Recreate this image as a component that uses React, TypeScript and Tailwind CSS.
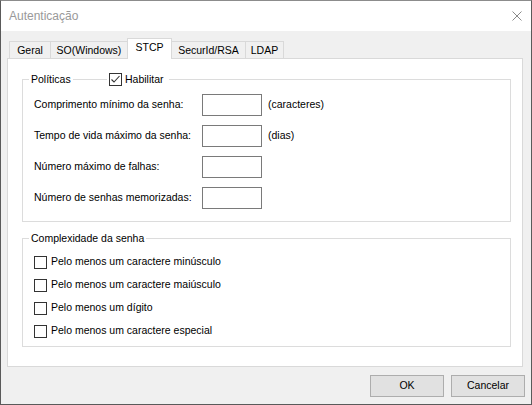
import { useState } from 'react';

const tabs = [
  { name: 'Geral', width: 'w-[42px]' },
  { name: 'SO(Windows)', width: 'w-[78px]' },
  { name: 'STCP', width: 'w-[45px]' },
  { name: 'SecurId/RSA', width: 'w-[75px]' },
  { name: 'LDAP', width: 'w-[39px]' },
];

const policyRows = [
  { label: 'Comprimento mínimo da senha:', suffix: '(caracteres)' },
  { label: 'Tempo de vida máximo da senha:', suffix: '(dias)' },
  { label: 'Número máximo de falhas:', suffix: '' },
  { label: 'Número de senhas memorizadas:', suffix: '' },
];

const complexity = [
  'Pelo menos um caractere minúsculo',
  'Pelo menos um caractere maiúsculo',
  'Pelo menos um dígito',
  'Pelo menos um caractere especial',
];

function CheckBox({ checked, onClick }: { checked: boolean; onClick: () => void }) {
  return (
    <span
      onClick={onClick}
      className="w-[13px] h-[13px] shrink-0 border border-[#333333] bg-white flex items-center justify-center"
    >
      {checked && (
        <svg width="11" height="11" viewBox="0 0 11 11">
          <polyline points="1.5,5.5 4,8 9.5,2" fill="none" stroke="#333333" strokeWidth="1.1" />
        </svg>
      )}
    </span>
  );
}

export default function App() {
  const [active, setActive] = useState('STCP');
  const [enabled, setEnabled] = useState(true);
  const [rules, setRules] = useState<boolean[]>([false, false, false, false]);

  return (
    <div className="w-[532px] h-[405px] flex flex-col bg-[#f0f0f0] border border-[#5a5a5a] border-t-[#8c8c8c] font-['Liberation_Sans',Arial,sans-serif] text-[10.5px] text-black overflow-hidden">
      {/* Title bar */}
      <div className="h-[30px] shrink-0 bg-white flex items-center justify-between pl-[8px] pr-[9px]">
        <span className="text-[12px] text-[#999999]">Autenticação</span>
        <svg width="10" height="10" viewBox="0 0 10 10">
          <path d="M0.5 0.5 L9.5 9.5 M9.5 0.5 L0.5 9.5" stroke="#8a8a8a" strokeWidth="1" fill="none" />
        </svg>
      </div>

      <div className="flex flex-col pt-[7px]">
        {/* Tabs */}
        <div className="h-[20px] flex items-end ml-[8px] relative z-10">
          {tabs.map((tab, i) => {
            const isActive = tab.name === active;
            return (
              <button
                key={tab.name}
                onClick={() => setActive(tab.name)}
                className={`${tab.width} ${i > 0 ? '-ml-px' : ''} border border-b-0 flex justify-center leading-[14px] ${
                  isActive
                    ? 'h-[21px] -mb-px bg-white border-[#d9d9d9] pt-[1px] relative z-10'
                    : 'h-[17px] bg-[#f0f0f0] border-[#d9d9d9] pt-[1px]'
                }`}
              >
                {tab.name}
              </button>
            );
          })}
        </div>

        {/* Tab panel */}
        <div className="h-[309px] ml-[6px] mr-[8px] bg-white border border-[#d9d9d9] pl-[14px] pr-[11px]">
          {/* Políticas */}
          <div className="relative mt-[20px] border border-[#dcdcdc] pt-[14px] pb-[12px] pl-[11px]">
            <div className="absolute -top-[8px] left-[6px] h-[14px] leading-[14px] bg-white px-[2px]">Políticas</div>
            <div className="absolute -top-[8px] left-[84px] h-[14px] leading-[14px] bg-white pl-[2px] pr-[5px] flex items-center gap-[3px]">
              <CheckBox checked={enabled} onClick={() => setEnabled(!enabled)} />
              <span>Habilitar</span>
            </div>

            <div className="flex flex-col gap-[9px]">
              {policyRows.map((row) => (
                <div key={row.label} className="flex items-center h-[22px]">
                  <span className="w-[168px] shrink-0">{row.label}</span>
                  <div className="w-[60px] h-[22px] border border-[#7a7a7a] bg-white" />
                  {row.suffix && <span className="ml-[6px]">{row.suffix}</span>}
                </div>
              ))}
            </div>
          </div>

          {/* Complexidade da senha */}
          <div className="relative mt-[16px] border border-[#dcdcdc] pt-[16px] pb-[8px] pl-[11px]">
            <div className="absolute -top-[8px] left-[6px] h-[14px] leading-[14px] bg-white px-[2px]">Complexidade da senha</div>
            <div className="flex flex-col gap-[9px]">
              {complexity.map((text, i) => (
                <div key={text} className="flex items-center h-[14px] gap-[4px]">
                  <CheckBox
                    checked={rules[i]}
                    onClick={() => setRules(rules.map((r, j) => (j === i ? !r : r)))}
                  />
                  <span>{text}</span>
                </div>
              ))}
            </div>
          </div>
        </div>

        {/* Buttons */}
        <div className="mt-[8px] flex justify-end gap-[7px] pr-[6px]">
          <button className="w-[74px] h-[22px] bg-[#e1e1e1] border border-[#adadad]">OK</button>
          <button className="w-[74px] h-[22px] bg-[#e1e1e1] border border-[#adadad]">Cancelar</button>
        </div>
      </div>
    </div>
  );
}
